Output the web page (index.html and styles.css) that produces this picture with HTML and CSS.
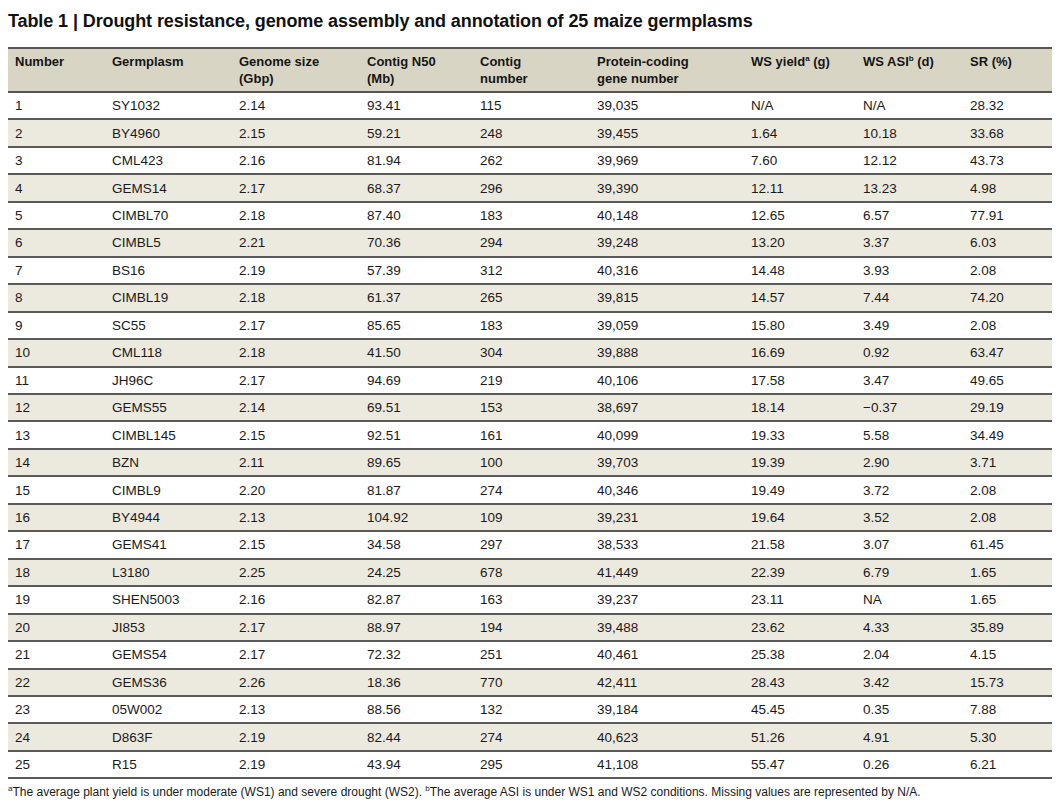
FILE: index.html
```html
<!DOCTYPE html>
<html>
<head>
<meta charset="utf-8">
<link rel="stylesheet" href="styles.css">
</head>
<body>
<div class="page">
<h1 class="title">Table 1 | Drought resistance, genome assembly and annotation of 25 maize germplasms</h1>
<table class="data">
<colgroup>
<col class="c1"><col class="c2"><col class="c3"><col class="c4"><col class="c5"><col class="c6"><col class="c7"><col class="c8"><col class="c9">
</colgroup>
<thead>
<tr><th>Number</th><th>Germplasm</th><th>Genome size<br>(Gbp)</th><th>Contig N50<br>(Mb)</th><th>Contig<br>number</th><th>Protein-coding<br>gene number</th><th>WS yield<sup>a</sup> (g)</th><th>WS ASI<sup>b</sup> (d)</th><th>SR (%)</th></tr>
</thead>
<tbody>
<tr><td>1</td><td>SY1032</td><td>2.14</td><td>93.41</td><td>115</td><td>39,035</td><td>N/A</td><td>N/A</td><td>28.32</td></tr>
<tr><td>2</td><td>BY4960</td><td>2.15</td><td>59.21</td><td>248</td><td>39,455</td><td>1.64</td><td>10.18</td><td>33.68</td></tr>
<tr><td>3</td><td>CML423</td><td>2.16</td><td>81.94</td><td>262</td><td>39,969</td><td>7.60</td><td>12.12</td><td>43.73</td></tr>
<tr><td>4</td><td>GEMS14</td><td>2.17</td><td>68.37</td><td>296</td><td>39,390</td><td>12.11</td><td>13.23</td><td>4.98</td></tr>
<tr><td>5</td><td>CIMBL70</td><td>2.18</td><td>87.40</td><td>183</td><td>40,148</td><td>12.65</td><td>6.57</td><td>77.91</td></tr>
<tr><td>6</td><td>CIMBL5</td><td>2.21</td><td>70.36</td><td>294</td><td>39,248</td><td>13.20</td><td>3.37</td><td>6.03</td></tr>
<tr><td>7</td><td>BS16</td><td>2.19</td><td>57.39</td><td>312</td><td>40,316</td><td>14.48</td><td>3.93</td><td>2.08</td></tr>
<tr><td>8</td><td>CIMBL19</td><td>2.18</td><td>61.37</td><td>265</td><td>39,815</td><td>14.57</td><td>7.44</td><td>74.20</td></tr>
<tr><td>9</td><td>SC55</td><td>2.17</td><td>85.65</td><td>183</td><td>39,059</td><td>15.80</td><td>3.49</td><td>2.08</td></tr>
<tr><td>10</td><td>CML118</td><td>2.18</td><td>41.50</td><td>304</td><td>39,888</td><td>16.69</td><td>0.92</td><td>63.47</td></tr>
<tr><td>11</td><td>JH96C</td><td>2.17</td><td>94.69</td><td>219</td><td>40,106</td><td>17.58</td><td>3.47</td><td>49.65</td></tr>
<tr><td>12</td><td>GEMS55</td><td>2.14</td><td>69.51</td><td>153</td><td>38,697</td><td>18.14</td><td>−0.37</td><td>29.19</td></tr>
<tr><td>13</td><td>CIMBL145</td><td>2.15</td><td>92.51</td><td>161</td><td>40,099</td><td>19.33</td><td>5.58</td><td>34.49</td></tr>
<tr><td>14</td><td>BZN</td><td>2.11</td><td>89.65</td><td>100</td><td>39,703</td><td>19.39</td><td>2.90</td><td>3.71</td></tr>
<tr><td>15</td><td>CIMBL9</td><td>2.20</td><td>81.87</td><td>274</td><td>40,346</td><td>19.49</td><td>3.72</td><td>2.08</td></tr>
<tr><td>16</td><td>BY4944</td><td>2.13</td><td>104.92</td><td>109</td><td>39,231</td><td>19.64</td><td>3.52</td><td>2.08</td></tr>
<tr><td>17</td><td>GEMS41</td><td>2.15</td><td>34.58</td><td>297</td><td>38,533</td><td>21.58</td><td>3.07</td><td>61.45</td></tr>
<tr><td>18</td><td>L3180</td><td>2.25</td><td>24.25</td><td>678</td><td>41,449</td><td>22.39</td><td>6.79</td><td>1.65</td></tr>
<tr><td>19</td><td>SHEN5003</td><td>2.16</td><td>82.87</td><td>163</td><td>39,237</td><td>23.11</td><td>NA</td><td>1.65</td></tr>
<tr><td>20</td><td>JI853</td><td>2.17</td><td>88.97</td><td>194</td><td>39,488</td><td>23.62</td><td>4.33</td><td>35.89</td></tr>
<tr><td>21</td><td>GEMS54</td><td>2.17</td><td>72.32</td><td>251</td><td>40,461</td><td>25.38</td><td>2.04</td><td>4.15</td></tr>
<tr><td>22</td><td>GEMS36</td><td>2.26</td><td>18.36</td><td>770</td><td>42,411</td><td>28.43</td><td>3.42</td><td>15.73</td></tr>
<tr><td>23</td><td>05W002</td><td>2.13</td><td>88.56</td><td>132</td><td>39,184</td><td>45.45</td><td>0.35</td><td>7.88</td></tr>
<tr><td>24</td><td>D863F</td><td>2.19</td><td>82.44</td><td>274</td><td>40,623</td><td>51.26</td><td>4.91</td><td>5.30</td></tr>
<tr><td>25</td><td>R15</td><td>2.19</td><td>43.94</td><td>295</td><td>41,108</td><td>55.47</td><td>0.26</td><td>6.21</td></tr>
</tbody>
</table>
<p class="foot"><sup>a</sup>The average plant yield is under moderate (WS1) and severe drought (WS2). <sup>b</sup>The average ASI is under WS1 and WS2 conditions. Missing values are represented by N/A.</p>
</div>
</body>
</html>
```

FILE: styles.css
```css
html, body {
  margin: 0;
  padding: 0;
  background: #ffffff;
}
body {
  font-family: "Liberation Sans", Arial, sans-serif;
  color: #1a1a1a;
}
.page {
  padding: 10px 7px 0 8px;
}
.title {
  margin: 0 0 15px 0;
  font-size: 18px;
  font-weight: bold;
  line-height: 22px;
  letter-spacing: -0.1px;
  color: #111;
}
.data {
  width: 1044px;
  border-collapse: collapse;
  table-layout: fixed;
  font-size: 13.5px;
}
.c1 { width: 97px; }
.c2 { width: 127px; }
.c3 { width: 128px; }
.c4 { width: 113px; }
.c5 { width: 117px; }
.c6 { width: 154px; }
.c7 { width: 112px; }
.c8 { width: 107px; }
.c9 { width: 89px; }
.data thead tr {
  background: #d8d5c4;
  border-top: 2px solid #555;
  border-bottom: 2px solid #555;
}
.data th {
  text-align: left;
  vertical-align: top;
  font-weight: bold;
  font-size: 13px;
  line-height: 17px;
  padding: 4px 7px 4px 7px;
  height: 34px;
  color: #151515;
}
.data td {
  padding: 0 7px;
  height: 25.46px;
  line-height: 15px;
  vertical-align: middle;
  color: #1a1a1a;
}
.data tbody tr {
  border-bottom: 2px solid #5a5a5a;
}
.data tbody tr:nth-child(even) {
  background: #ecE9df;
}
sup {
  font-size: 8px;
  line-height: 0;
  vertical-align: 5px;
}
.foot {
  margin: 5px 0 0 0;
  font-size: 12px;
  line-height: 16px;
  color: #1a1a1a;
}
```
